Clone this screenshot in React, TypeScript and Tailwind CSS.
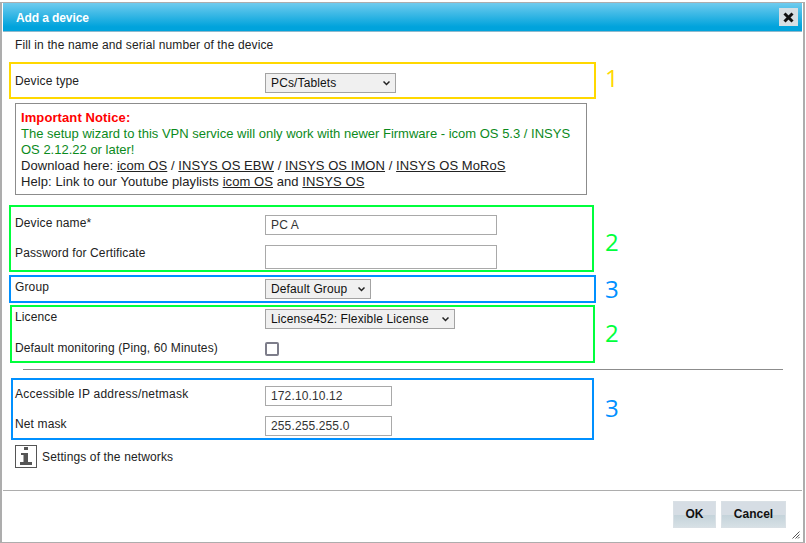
import type { ReactNode } from "react";

const selectClass =
  "h-[20px] w-full appearance-none border border-[#a3a3a3] bg-[#f0f0f0] pl-[5px] text-[12px] text-[#111] [font-family:'Liberation_Sans',Arial,sans-serif]";
const inputClass =
  "border border-[#a9a9a9] bg-white px-[5px] text-[12px] text-[#333] outline-none [font-family:'Liberation_Sans',Arial,sans-serif]";

function Field({ label, wide, children }: { label: string; wide?: boolean; children: ReactNode }) {
  return (
    <div className="flex items-start">
      <span className={wide ? "mt-px w-[250px] shrink-0 leading-[14px] tracking-[0.24px]" : "mt-px w-[250px] shrink-0 leading-[14px]"}>
        {label}
      </span>
      {children}
    </div>
  );
}

function Select({ width, value }: { width: string; value: string }) {
  return (
    <div className={`relative ${width}`}>
      <select className={selectClass} defaultValue={value}>
        <option>{value}</option>
      </select>
      <svg width="7" height="5" viewBox="0 0 7 5" className="pointer-events-none absolute right-[6px] top-[8px]">
        <path d="M0.5 0.5L3.5 3.5L6.5 0.5" fill="none" stroke="#222" strokeWidth="1.5" />
      </svg>
    </div>
  );
}

// coloured annotation box with the number beside it
function Marked({
  box,
  num,
  mark,
  children,
}: {
  box: string;
  num: string;
  mark: string;
  children: ReactNode;
}) {
  return (
    <div className="flex items-center">
      <div className={box}>{children}</div>
      <span className={num}>{mark}</span>
    </div>
  );
}

function InfoIcon() {
  return (
    <svg width="22" height="23" viewBox="0 0 22 23" className="shrink-0">
      <rect x="0.5" y="0.5" width="21" height="22" fill="white" stroke="#555" />
      <rect x="9" y="2" width="4" height="3" fill="#555" />
      <path d="M6 8h7v9H8.5v-7H6z" fill="#555" />
      <rect x="5" y="17" width="12" height="3" fill="#555" />
    </svg>
  );
}

export default function App() {
  return (
    <div className="h-[543px] w-[806px] overflow-hidden bg-white pt-[2px] text-[12px] tracking-[0.13px] text-[#222] [font-family:'Liberation_Sans',Arial,sans-serif]">
      <div className="relative flex h-[541px] w-[805px] flex-col border-x-2 border-y border-[#adadad] px-px">
        {/* Title bar */}
        <div className="flex h-[29px] shrink-0 items-center justify-between border-b border-[#8fb9cc] bg-[linear-gradient(#6fcbee,#00a3dc_85%)] pl-[13px] pr-[4px]">
          <span className="pt-px text-[12px] font-bold tracking-[-0.1px] text-white">Add a device</span>
          <button className="flex h-[18px] w-[19px] items-center justify-center bg-[#d6dee3]">
            <svg width="11" height="11" viewBox="0 0 11 11">
              <path d="M1.5 1.5l8 8M9.5 1.5l-8 8" stroke="#111" strokeWidth="3" />
            </svg>
          </button>
        </div>

        {/* Form */}
        <div className="flex min-h-0 flex-1 flex-col">
          <p className="mb-[10px] ml-[12px] mt-[6px] leading-[14px]">
            Fill in the name and serial number of the device
          </p>

          <Marked
            box="ml-[6px] w-[587px] border-2 border-[#ffd800] pb-[4px] pl-[4px] pt-[9px]"
            num="-mt-[5px] ml-[9px] text-[24px] leading-[24px] text-[#ffd800] [font-family:'Open_Sans',sans-serif]"
            mark="1"
          >
            <Field label="Device type">
              <Select width="w-[131px]" value="PCs/Tablets" />
            </Field>
          </Marked>

          <div className="ml-[12px] mt-[4px] h-[92px] w-[572px] border border-[#8c8c8c] px-[5px] pt-[6px] text-[13px] leading-[16px] tracking-[0.08px] text-[#222]">
            <b className="block tracking-[0.1px] text-[#ff0000]">Important Notice:</b>
            <span className="tracking-normal text-[#0b8a1c]">
              The setup wizard to this VPN service will only work with newer Firmware - icom OS 5.3 / INSYS OS
              2.12.22 or later!
            </span>
            <br />
            Download here: <u>icom OS</u> / <u>INSYS OS EBW</u> / <u>INSYS OS IMON</u> / <u>INSYS OS MoRoS</u>
            <br />
            Help: Link to our Youtube playlists <u>icom OS</u> and <u>INSYS OS</u>
          </div>

          <div className="mt-[10px]">
            <Marked
              box="ml-[6px] flex w-[585px] flex-col gap-[10px] border-2 border-[#00ff3c] pb-px pl-[4px] pt-[8px]"
              num="ml-[11px] mt-[7px] text-[24px] leading-[24px] text-[#00ff3c] [font-family:'Open_Sans',sans-serif]"
              mark="2"
            >
              <Field label="Device name*">
                <input readOnly value="PC A" className={`${inputClass} h-[20px] w-[232px]`} />
              </Field>
              <Field label="Password for Certificate">
                <input readOnly value="" className={`${inputClass} h-[24px] w-[232px]`} />
              </Field>
            </Marked>
          </div>

          <div className="mt-[3px]">
            <Marked
              box="ml-[6px] w-[587px] border-2 border-[#0090ff] py-[2px] pl-[4px]"
              num="ml-[9px] text-[24px] leading-[24px] text-[#0090ff] [font-family:'Open_Sans',sans-serif]"
              mark="3"
            >
              <Field label="Group">
                <Select width="w-[106px]" value="Default Group" />
              </Field>
            </Marked>
          </div>

          <div className="mt-[2px]">
            <Marked
              box="ml-[7px] flex w-[585px] flex-col gap-[11px] border-2 border-[#00ff3c] pb-[5px] pl-[3px] pt-[2px]"
              num="-mt-[2px] ml-[10px] text-[24px] leading-[24px] text-[#00ff3c] [font-family:'Open_Sans',sans-serif]"
              mark="2"
            >
              <Field label="Licence">
                <Select width="w-[190px]" value="License452: Flexible License" />
              </Field>
              <Field label="Default monitoring (Ping, 60 Minutes)">
                <span className="mt-[2px] h-[14px] w-[14px] rounded-[2px] border-2 border-[#7d7d8a] bg-white" />
              </Field>
            </Marked>
          </div>

          <div className="ml-[20px] mt-[6px] h-px w-[760px] bg-[#8c8c8c]" />

          <div className="mt-[8px]">
            <Marked
              box="ml-[8px] flex w-[583px] flex-col gap-[10px] border-2 border-[#0090ff] pb-[2px] pl-[2px] pt-[6px]"
              num="-mt-[2px] ml-[11px] text-[24px] leading-[24px] text-[#0090ff] [font-family:'Open_Sans',sans-serif]"
              mark="3"
            >
              <Field label="Accessible IP address/netmask" wide>
                <input readOnly value="172.10.10.12" className={`${inputClass} h-[20px] w-[127px]`} />
              </Field>
              <Field label="Net mask">
                <input readOnly value="255.255.255.0" className={`${inputClass} h-[20px] w-[127px]`} />
              </Field>
            </Marked>
          </div>

          <div className="ml-[12px] mt-[5px] flex items-center gap-[5px]">
            <InfoIcon />
            <span className="leading-[14px]">Settings of the networks</span>
          </div>
        </div>

        {/* Footer */}
        <div className="flex h-[52px] shrink-0 items-start justify-end gap-[5px] border-t border-[#adadad] pr-[16px] pt-[10px]">
          <button className="h-[27px] w-[43px] border border-[#d9e0e5] bg-[linear-gradient(#d6dde4_50%,#c4d3da_52%,#d6e0e5)] pb-px text-[12px] font-bold tracking-normal text-[#111]">
            OK
          </button>
          <button className="h-[27px] w-[65px] border border-[#d9e0e5] bg-[linear-gradient(#d6dde4_50%,#c4d3da_52%,#d6e0e5)] pb-px text-[12px] font-bold tracking-normal text-[#111]">
            Cancel
          </button>
        </div>

        {/* Resize grip */}
        <svg width="8" height="8" viewBox="0 0 8 8" className="absolute bottom-[3px] right-[3px]">
          <path d="M0.5 7.5l7-7M3.5 7.5l4-4M6 7.5l1.5-1.5" stroke="#555" strokeWidth="1" />
        </svg>
      </div>
    </div>
  );
}
